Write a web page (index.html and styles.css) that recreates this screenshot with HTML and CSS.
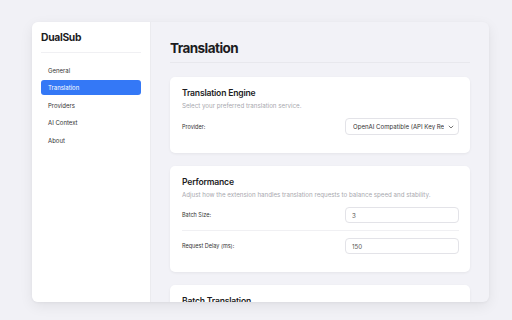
FILE: index.html
```html
<!DOCTYPE html>
<html>
<head>
<meta charset="utf-8">
<link rel="stylesheet" href="styles.css">
</head>
<body>
<div class="window">
  <aside class="sidebar">
    <div class="brand">DualSub</div>
    <nav class="nav">
      <div class="nav-item">General</div>
      <div class="nav-item active">Translation</div>
      <div class="nav-item">Providers</div>
      <div class="nav-item">AI Context</div>
      <div class="nav-item">About</div>
    </nav>
  </aside>
  <main class="main">
    <h1 class="page-title">Translation</h1>
    <section class="card">
      <h2 class="card-title">Translation Engine</h2>
      <p class="card-sub">Select your preferred translation service.</p>
      <div class="rows">
        <div class="row">
          <label class="label">Provider:</label>
          <div class="select">
            <span class="select-text">OpenAI Compatible (API Key Re</span>
            <svg class="chev" width="6" height="4" viewBox="0 0 6 4"><path d="M0.8 0.8 L3 3 L5.2 0.8" fill="none" stroke="#555" stroke-width="0.8"/></svg>
          </div>
        </div>
      </div>
    </section>
    <section class="card">
      <h2 class="card-title">Performance</h2>
      <p class="card-sub">Adjust how the extension handles translation requests to balance speed and stability.</p>
      <div class="rows">
        <div class="row bordered">
          <label class="label">Batch Size:</label>
          <div class="input">3</div>
        </div>
        <div class="row">
          <label class="label">Request Delay (ms):</label>
          <div class="input">150</div>
        </div>
      </div>
    </section>
    <section class="card last">
      <h2 class="card-title">Batch Translation</h2>
    </section>
  </main>
</div>
</body>
</html>
```
FILE: styles.css
```css
* { box-sizing: border-box; }
html, body { margin: 0; padding: 0; }
body {
  background: #f1f1f6;
  font-family: Inter, "Noto Sans", sans-serif;
  color: #1c1c1e;
  width: 512px;
  height: 320px;
  overflow: hidden;
}
.window {
  margin: 22px 0 0 32px;
  width: 457px;
  height: 280px;
  display: flex;
  border-radius: 6px;
  overflow: hidden;
  background: #f2f2f7;
  box-shadow: 0 4px 14px rgba(0, 0, 0, 0.07), 0 1px 3px rgba(0, 0, 0, 0.04);
}
.sidebar {
  width: 119px;
  flex: none;
  background: #ffffff;
  border-right: 1px solid #ebebef;
  padding: 9px 9px 0 9px;
}
.brand {
  font-size: 10.3px;
  line-height: 13px;
  font-weight: 700;
  letter-spacing: -0.3px;
  color: #1c1c1e;
  padding-bottom: 8px;
  border-bottom: 1px solid #f0f0f3;
}
.nav {
  margin-top: 10px;
  display: flex;
  flex-direction: column;
  gap: 2.4px;
}
.nav-item {
  height: 15px;
  line-height: 15px;
  padding-left: 7px;
  font-size: 6px;
  color: #333;
  border-radius: 3px;
}
.nav-item.active {
  background: #3478f6;
  color: #fff;
}
.main {
  flex: 1;
  padding: 18px 19px 0 19px;
  overflow: hidden;
}
.page-title {
  margin: 0 0 14px 0;
  font-size: 13.5px;
  line-height: 17px;
  font-weight: 700;
  letter-spacing: -0.55px;
  padding-bottom: 5px;
  border-bottom: 1px solid #e8e8ed;
}
.card {
  background: #fff;
  border-radius: 5px;
  padding: 11px 11px 11px 12px;
  margin-bottom: 13px;
  box-shadow: 0 1px 3px rgba(0, 0, 0, 0.06);
}
.card-title {
  margin: 0;
  font-size: 8.6px;
  line-height: 11px;
  font-weight: 600;
  letter-spacing: -0.2px;
  color: #1c1c1e;
}
.card-sub {
  margin: 2px 0 0 0;
  font-size: 6.2px;
  line-height: 9px;
  color: #a8a8ae;
}
.rows { margin-top: 1px; }
.row {
  display: flex;
  align-items: center;
  justify-content: space-between;
  padding: 7px 0;
}
.row.bordered { border-bottom: 1px solid #f0f0f3; }
.label {
  font-size: 5.5px;
  color: #333;
}
.select {
  width: 114px;
  height: 17px;
  border: 1px solid #e3e3e8;
  border-radius: 4px;
  display: flex;
  align-items: center;
  padding: 0 4px 0 7px;
  gap: 4px;
}
.select-text {
  flex: 1;
  white-space: nowrap;
  overflow: hidden;
  font-size: 6.1px;
  color: #333;
}
.chev { flex: none; }
.input {
  width: 114px;
  height: 16px;
  border: 1px solid #e3e3e8;
  border-radius: 4px;
  padding: 0 6px;
  display: flex;
  align-items: center;
  font-size: 6.2px;
  color: #555;
}
```
